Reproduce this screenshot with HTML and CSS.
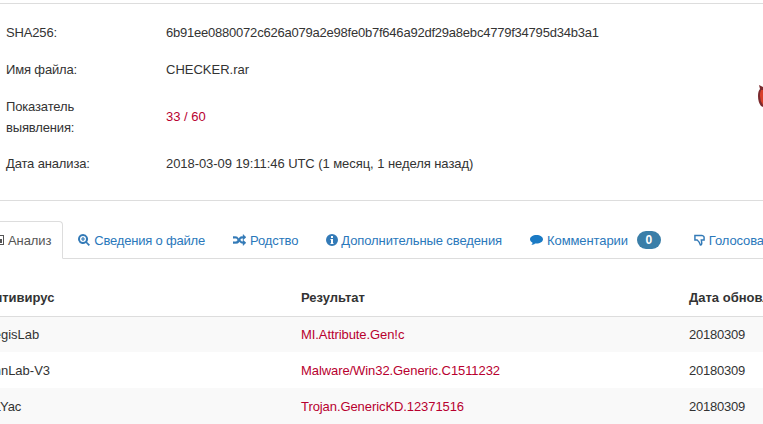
FILE: index.html
```html
<!DOCTYPE html>
<html lang="ru">
  <head>
    <meta charset="UTF-8" />
    <title>Анализ файла</title>
    <link rel="stylesheet" href="styles.css">
  </head>
  <body>
    <div class="page">
      <!-- File summary -->
      <div class="summary">
        <div class="row"><div class="label">SHA256:</div><div class="value hash">6b91ee0880072c626a079a2e98fe0b7f646a92df29a8ebc4779f34795d34b3a1</div></div>
        <div class="row"><div class="label">Имя файла:</div><div class="value">CHECKER.rar</div></div>
        <div class="row row-tall"><div class="label">Показатель<br>выявления:</div><div class="value danger">33 / 60</div></div>
        <div class="row"><div class="label">Дата анализа:</div><div class="value date">2018-03-09 19:11:46 UTC (1 месяц, 1 неделя назад)</div></div>
        <svg class="mascot" width="5" height="23" viewBox="0 0 5 23">
          <path d="M1 0 L5 2 V22 L3 21 Q0 17 0 11 Q0 6 2 4 Z" fill="#7a2a2e"/>
          <path d="M3 5 H5 V20 Q2 16 2 11 Q2 7 3 5 Z" fill="#d8402a"/>
        </svg>
      </div>

      <!-- Tabs -->
      <ul class="tabs">
        <li class="tab active">
          <svg class="icon" viewBox="0 0 12 12"><path fill="#555" d="M0 1h12v10H0z"/><path fill="#fff" d="M1 2h10v8H1z"/><path fill="#555" d="M2 6h2v3H2zM5 3h2v6H5zM8 5h2v4H8z"/></svg>
          Анализ
        </li>
        <li class="tab tab-files">
          <svg class="icon" viewBox="0 0 12 12"><path fill="#337ab7" fill-rule="evenodd" d="M5 0a5 5 0 0 1 4.100 7.900L12 10.700 10.700 12 7.900 9.100A5 5 0 1 1 5 0zm0 2a3 3 0 1 0 0 6 3 3 0 0 0 0-6zM4.400 3h1.200v1.400H7v1.200H5.600V7H4.400V5.600H3V4.400h1.400z"/></svg>
          Сведения о файле
        </li>
        <li class="tab">
          <svg class="icon icon-wide" viewBox="0 0 13 12"><path fill="#337ab7" stroke="#337ab7" stroke-width="0.4" d="M0 2.500h2.500c1.500 0 2.300.8 3.200 2.100L4.800 5.900C4 4.800 3.500 4.300 2.500 4.300H0zM0 7.700h2.500c1 0 1.600-.7 2.500-2l1.200-1.700C7.400 2.300 8.300 2.500 10 2.500V.5l3 2.700-3 2.700V4.300c-1.200 0-1.800 0-2.600 1.100L6.200 8.100C5 9.700 4 9.500 2.500 9.500H0zM6.300 7.300l.9-1.300c.7 1 1.300 1.700 2.800 1.700V6.100l3 2.700-3 2.700v-2C8.300 9.500 7.300 8.700 6.300 7.300z"/></svg>
          Родство
        </li>
        <li class="tab tab-tight">
          <svg class="icon" viewBox="0 0 12 12"><path fill="#337ab7" fill-rule="evenodd" d="M6 0a6 6 0 1 1 0 12A6 6 0 0 1 6 0zM5 2v2h2V2zM4.500 5v1H5v3h-.5v1h3V9H7V5z"/></svg>
          Дополнительные сведения
        </li>
        <li class="tab">
          <svg class="icon icon-wide" viewBox="0 0 13 12"><path fill="#1a7ac4" d="M6.500 1c3.600 0 6.500 1.900 6.500 4.300S10.100 9.600 6.500 9.600c-.5 0-1 0-1.500-.1-.9 1-2.200 1.400-3.700 1.500.7-.6 1.200-1.400 1.300-2.300C1 8 0 6.700 0 5.300 0 2.900 2.900 1 6.500 1z"/></svg>
          Комментарии
          <span class="badge">0</span>
        </li>
        <li class="tab">
          <svg class="icon icon-narrow" viewBox="0 0 12 13"><path fill="none" stroke="#337ab7" stroke-width="1.600" d="M1 1.500h7.500c1 0 2.500 1 2.500 2v3H8L8.500 10c0 1.500-1 2-1.500 2-.7-2-1.500-4-3.500-5.500H1z"/></svg>
          Голосования
        </li>
      </ul>

      <!-- Antivirus results -->
      <table class="results">
        <thead>
          <tr><th class="col-av">Антивирус</th><th class="col-res">Результат</th><th>Дата обновления</th></tr>
        </thead>
        <tbody>
          <tr><td>AegisLab</td><td class="danger detect">MI.Attribute.Gen!c</td><td class="num">20180309</td></tr>
          <tr><td>AhnLab-V3</td><td class="danger detect">Malware/Win32.Generic.C1511232</td><td class="num">20180309</td></tr>
          <tr><td>ALYac</td><td class="danger detect">Trojan.GenericKD.12371516</td><td class="num">20180309</td></tr>
        </tbody>
      </table>
    </div>
  </body>
</html>
```

FILE: styles.css
```css
* {
  margin: 0;
  padding: 0;
  box-sizing: border-box;
}

html,
body {
  height: 424px;
  overflow: hidden;
  background: white;
}

body {
  font-family: "Liberation Sans", Arial, sans-serif;
  font-size: 13px;
  line-height: 21px;
  color: #333;
}

/* Page is scrolled a little to the right in the screenshot */
.page {
  width: 900px;
  margin-left: -18px;
  padding-top: 3px;
}

/* Summary */
.summary {
  position: relative;
  height: 198px;
  padding-top: 10px;
  border-top: 1px solid #ddd;
  border-bottom: 1px solid #ddd;
}

.row {
  display: flex;
  align-items: center;
  padding: 8px 0 8px 24px;
}

.row-tall {
  padding-bottom: 7px;
}

.row-tall .value {
  margin-bottom: 2px;
}

.label {
  width: 160px;
  letter-spacing: -0.15px;
}

.hash {
  letter-spacing: -0.22px;
}

.date {
  letter-spacing: -0.06px;
}

.danger {
  color: #b8002f;
}

.mascot {
  position: absolute;
  left: 776px;
  top: 81px;
}

/* Tabs */
.tabs {
  display: flex;
  list-style: none;
  margin-top: 20px;
  height: 38px;
  border-bottom: 1px solid #ddd;
}

.tab {
  display: flex;
  align-items: center;
  gap: 4px;
  height: 38px;
  padding: 0 14px;
  color: #2a78bb;
  letter-spacing: -0.1px;
  white-space: nowrap;
}

.tab-files {
  letter-spacing: -0.2px;
}

.tab-tight {
  gap: 3px;
}

.tab.active {
  padding: 0 11px 0 9px;
  margin-right: 1px;
  color: #555;
  background: white;
  border: 1px solid #ddd;
  border-bottom-color: white;
  border-radius: 4px 4px 0 0;
}

.icon {
  width: 12px;
  height: 12px;
  flex: none;
}

.icon-wide {
  width: 13px;
}

.icon-narrow {
  width: 11px;
}

.badge {
  width: 24px;
  margin: 0 5px;
  font-weight: 700;
  font-size: 12px;
  line-height: 18px;
  text-align: center;
  color: white;
  background: #3a7ea8;
  border-radius: 10px;
}

/* Results table */
.results {
  width: 905px;
  margin-top: 20px;
  margin-left: -5px;
  border-collapse: collapse;
  table-layout: fixed;
}

.results th,
.results td {
  height: 36px;
  padding: 0 8px;
  text-align: left;
  white-space: nowrap;
}

.results th {
  height: 37px;
  border-bottom: 1px solid #ddd;
}

.col-av {
  width: 316px;
}

.col-res {
  width: 388px;
}

.results .detect {
  letter-spacing: -0.08px;
}

.num {
  letter-spacing: -0.22px;
}

.results tbody tr:nth-child(odd) {
  background: #f9f9f9;
}
```
